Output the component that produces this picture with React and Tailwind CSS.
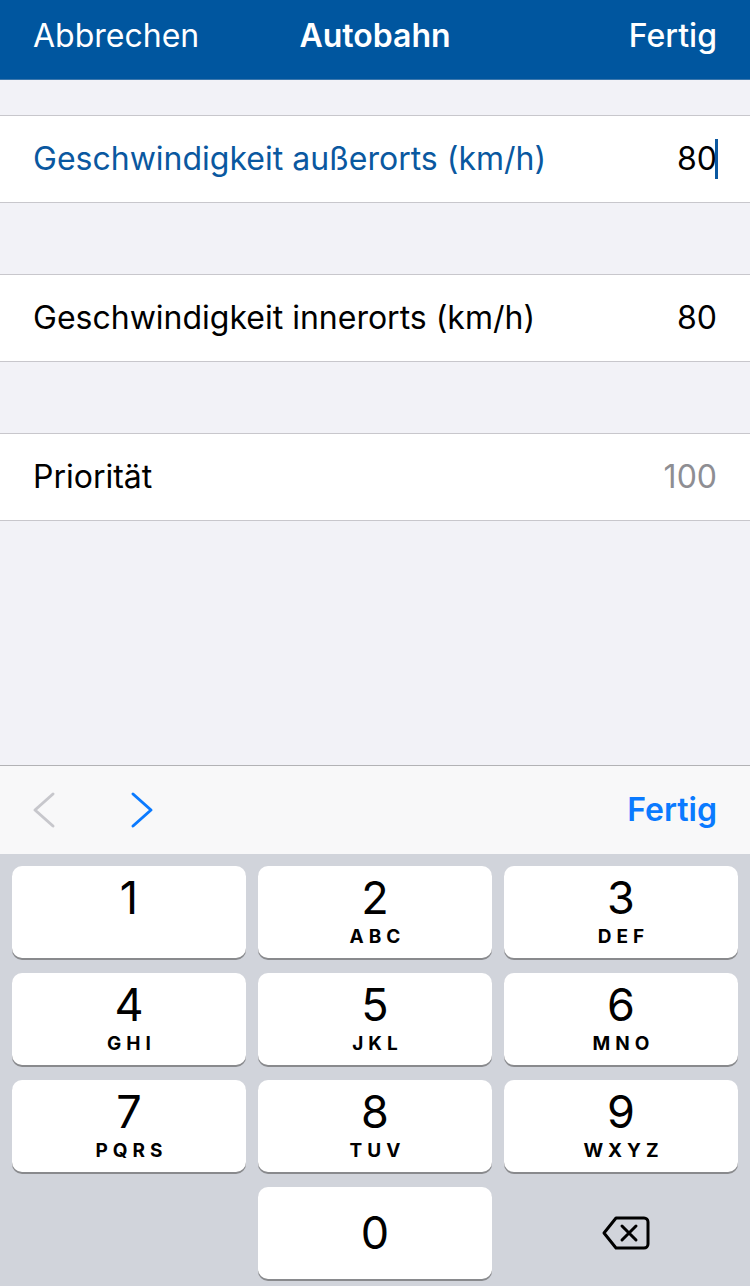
import React from 'react';

const font = { fontFamily: 'Inter, "Noto Sans", sans-serif' };

const keys = [
    { n: '1', l: '' },
    { n: '2', l: 'ABC' },
    { n: '3', l: 'DEF' },
    { n: '4', l: 'GHI' },
    { n: '5', l: 'JKL' },
    { n: '6', l: 'MNO' },
    { n: '7', l: 'PQRS' },
    { n: '8', l: 'TUV' },
    { n: '9', l: 'WXYZ' },
];

function Row({ label, value, active, muted }) {
    return (
        <div className="h-[88px] bg-white border-y border-[#c8c7cc] flex items-center justify-between pl-[33px] pr-[33px]">
            <span className={`text-[32px] ${active ? 'text-[#0a58a0]' : 'text-black'}`}>{label}</span>
            <span className={`text-[32px] flex items-center ${muted ? 'text-[#8e8e93]' : 'text-black'}`}>
                {value}
                {active && <span className="inline-block w-[3px] h-[40px] bg-[#0a58a0] -ml-[2px] -mr-[1px]" />}
            </span>
        </div>
    );
}

function Key({ n, l }) {
    return (
        <div className="h-[92px] bg-white rounded-[10px] shadow-[0_2px_0_#898a8d] flex flex-col items-center justify-start pt-[6px]">
            <span className="text-[45px] leading-[52px] text-black">{n}</span>
            {l && <span className="text-[19px] leading-[22px] mt-[2px] font-bold tracking-[5px] pl-[5px] text-black">{l}</span>}
        </div>
    );
}

export default function App() {
    return (
        <div className="w-[750px] h-[1286px] bg-[#f2f2f7] flex flex-col overflow-hidden" style={font}>
            {/* Nav bar */}
            <header className="h-[80px] bg-[#00569f] border-b border-[#3d78ad] grid grid-cols-3 items-center px-[33px] pb-[8px] text-white text-[32px]">
                <span>Abbrechen</span>
                <span className="font-semibold text-center">Autobahn</span>
                <span className="font-medium text-right">Fertig</span>
            </header>

            <div className="h-[35px]" />
            <Row label="Geschwindigkeit außerorts (km/h)" value="80" active />
            <div className="h-[71px]" />
            <Row label="Geschwindigkeit innerorts (km/h)" value="80" />
            <div className="h-[71px]" />
            <Row label="Priorität" value="100" muted />
            <div className="flex-1" />

            {/* Keyboard toolbar */}
            <div className="h-[89px] bg-[#f8f8f9] border-t border-[#b2b2b5] flex items-center justify-between pl-[31px] pr-[33px]">
                <div className="flex items-center gap-[72px]">
                    <svg width="26" height="38" viewBox="0 0 26 38" fill="none" stroke="#c7c7cc" strokeWidth="3" strokeLinecap="round" strokeLinejoin="round">
                        <path d="M22 3 L4 19 L22 35" />
                    </svg>
                    <svg width="26" height="38" viewBox="0 0 26 38" fill="none" stroke="#0a7aff" strokeWidth="3" strokeLinecap="round" strokeLinejoin="round">
                        <path d="M4 3 L22 19 L4 35" />
                    </svg>
                </div>
                <span className="text-[32px] font-semibold text-[#0a7aff]">Fertig</span>
            </div>

            {/* Number pad */}
            <div className="h-[432px] bg-[#d1d4db] px-[12px] pt-[12px]">
                <div className="grid grid-cols-3 gap-x-[12px] gap-y-[15px]">
                    {keys.map((k) => (
                        <Key key={k.n} n={k.n} l={k.l} />
                    ))}
                    <div />
                    <div className="h-[92px] bg-white rounded-[10px] shadow-[0_2px_0_#898a8d] flex items-center justify-center">
                        <span className="text-[45px] text-black">0</span>
                    </div>
                    <div className="h-[92px] flex items-center justify-center pl-[10px]">
                        <svg width="48" height="34" viewBox="0 0 48 34" fill="none" stroke="#000" strokeWidth="3" strokeLinejoin="round" strokeLinecap="round">
                            <path d="M14 2 H42 a4 4 0 0 1 4 4 V28 a4 4 0 0 1 -4 4 H14 L2 17 Z" />
                            <path d="M20 10 L34 24 M34 10 L20 24" />
                        </svg>
                    </div>
                </div>
            </div>
        </div>
    );
}
